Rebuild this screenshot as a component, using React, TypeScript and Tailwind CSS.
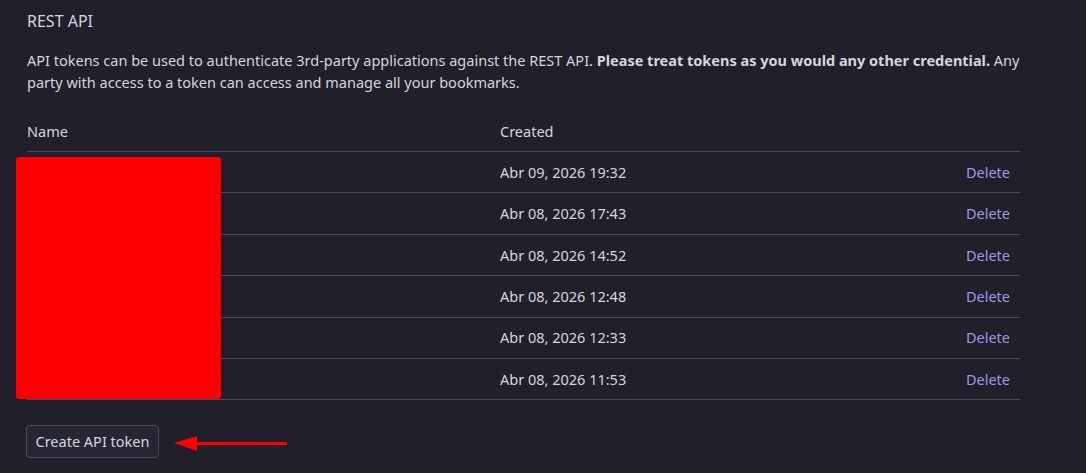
const rows = [
  "Abr 09, 2026 19:32",
  "Abr 08, 2026 17:43",
  "Abr 08, 2026 14:52",
  "Abr 08, 2026 12:48",
  "Abr 08, 2026 12:33",
  "Abr 08, 2026 11:53",
];

export default function App() {
  return (
    <div
      className="min-h-[473px] w-[1086px] bg-[#201f2a] text-[#d6d5de] pl-[27px] pt-[9px]"
      style={{ fontFamily: '"Noto Sans", sans-serif' }}
    >
      <h2 className="text-base leading-6">REST API</h2>
      <p className="mt-4 w-[1000px] text-[14.5px] leading-[22px]">
        API tokens can be used to authenticate 3rd-party applications against the REST API.{" "}
        <strong className="font-bold">Please treat tokens as you would any other credential.</strong> Any
        party with access to a token can access and manage all your bookmarks.
      </p>

      {/* Tokens table */}
      <div className="relative mt-[18px] w-[993px] text-[14.5px]">
        <div className="flex h-[41px] items-center border-b border-[#4b4959] pt-[1px]">
          <span className="w-[473px]">Name</span>
          <span>Created</span>
        </div>
        {rows.map((date) => (
          <div key={date} className="flex h-[41.4px] items-center border-b border-[#4b4959] pr-[10px] pt-[1px]">
            <span className="w-[473px]" />
            <span className="flex-1">{date}</span>
            <span className="text-[#9d98e6]">Delete</span>
          </div>
        ))}
        {/* redaction box */}
        <div className="absolute left-[-11px] top-[46px] h-[242px] w-[205px] rounded-[3px] bg-[#ff0000]" />
      </div>

      <div className="mt-[25px] flex items-center">
        <button className="ml-[-1px] h-[33px] w-[133px] rounded-[4px] border border-[#4b4a5c] bg-[#262634] text-[14.5px] text-[#d6d5de]">
          Create API token
        </button>
        <svg width="114" height="18" viewBox="0 0 114 18" className="ml-[15px] mt-[4px]">
          <polygon points="0,8 23,1 23,16" fill="#ff0000" />
          <rect x="22" y="7" width="91" height="3" fill="#ff0000" />
        </svg>
      </div>
    </div>
  );
}
